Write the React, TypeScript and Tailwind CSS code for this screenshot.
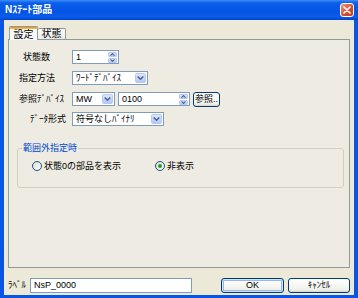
import React from 'react';

const FONT = "font-[family-name:'Liberation_Sans','Noto_Sans_CJK_JP',sans-serif]";

function Chevron({ dir }: { dir: 'up' | 'down' }) {
  return (
    <svg width="5" height="3" viewBox="0 0 5 3" className="block">
      <path
        d={dir === 'up' ? 'M0.5 2.6 L2.5 0.6 L4.5 2.6' : 'M0.5 0.4 L2.5 2.4 L4.5 0.4'}
        fill="none"
        stroke="#4D6185"
        strokeWidth="1.1"
      />
    </svg>
  );
}

function SpinBox({ value, width }: { value: string; width: string }) {
  return (
    <div className={`flex h-[14px] items-stretch border border-[#7F9DB9] bg-white ${width}`}>
      <span className="flex flex-1 items-center pl-[3px] text-[9px] leading-none text-black">{value}</span>
      <div className="flex w-[11px] flex-col gap-[1px] p-[1px]">
        <div className="flex flex-1 items-center justify-center rounded-[1px] border border-[#B7C9F3] bg-[linear-gradient(180deg,#DCE6FD,#B9CCF8)]">
          <Chevron dir="up" />
        </div>
        <div className="flex flex-1 items-center justify-center rounded-[1px] border border-[#B7C9F3] bg-[linear-gradient(180deg,#DCE6FD,#B9CCF8)]">
          <Chevron dir="down" />
        </div>
      </div>
    </div>
  );
}

function Combo({ value, width }: { value: string; width: string }) {
  return (
    <div className={`flex h-[14px] items-stretch border border-[#7F9DB9] bg-white ${width}`}>
      <span className="flex flex-1 items-center whitespace-nowrap pl-[3px] text-[9px] leading-none text-black">{value}</span>
      <div className="w-[13px] p-[1px]">
        <div className="flex h-full items-center justify-center rounded-[2px] border border-[#B7C9F3] bg-[linear-gradient(180deg,#DCE6FD,#B3C7F7)]">
          <svg width="7" height="4" viewBox="0 0 7 4" className="block">
            <path d="M0.7 0.5 L3.5 3.2 L6.3 0.5" fill="none" stroke="#4D6185" strokeWidth="1.5" />
          </svg>
        </div>
      </div>
    </div>
  );
}

function XpButton({ label, width, primary }: { label: string; width: string; primary?: boolean }) {
  return (
    <div
      className={`flex h-[15px] items-center justify-center whitespace-nowrap rounded-[3px] border border-[#003C74] bg-[linear-gradient(180deg,#FFFFFF,#F0F0EA_85%,#D6D0C5)] text-[9px] leading-none text-black ${width} ${
        primary ? 'shadow-[inset_0_0_0_1px_#CEE7FF,inset_0_0_0_2px_#98B8EA]' : ''
      }`}
    >
      {label}
    </div>
  );
}

function Radio({ checked }: { checked?: boolean }) {
  return (
    <div className="flex h-[10px] w-[10px] items-center justify-center rounded-full border border-[#1C5180] bg-[linear-gradient(135deg,#DCDBD3,#FFFFFF)]">
      {checked && <div className="h-[4px] w-[4px] rounded-full bg-[#21A121]" />}
    </div>
  );
}

export default function App() {
  return (
    <div className={`flex h-[298px] w-[358px] flex-col bg-[#0A55E3] ${FONT}`}>
      {/* title bar */}
      <div className="flex h-[20px] items-center bg-[linear-gradient(180deg,#3C8DF5_0%,#0A5EEA_15%,#0454E4_60%,#0A5CEA_85%,#0043CC_100%)] pl-[5px] pr-[4px]">
        <span className="text-[10px] font-bold leading-none text-white">Nｽﾃｰﾄ部品</span>
        <div className="ml-auto flex h-[14px] w-[14px] items-center justify-center rounded-[3px] border border-white bg-[linear-gradient(135deg,#EE9A80,#D6502F_55%,#C23E20)]">
          <svg width="8" height="8" viewBox="0 0 8 8" className="block">
            <path d="M1 1 L7 7 M7 1 L1 7" stroke="white" strokeWidth="1.6" strokeLinecap="round" />
          </svg>
        </div>
      </div>

      {/* dialog body */}
      <div className="mx-[4px] mb-[3px] flex flex-1 flex-col bg-[#ECE9D8] px-[4px] pt-[6px] pb-[2px]">
        {/* tabs */}
        <div className="relative z-10 flex h-[13px] items-end pl-[1px]">
          <div className="-mb-[1px] flex h-[14px] w-[29px] flex-col overflow-hidden rounded-t-[2px] border border-b-0 border-[#919B9C] bg-[#FCFCFE]">
            <div className="h-[2px] bg-[linear-gradient(180deg,#E68B2C,#FFC73C)]" />
            <div className="flex flex-1 items-center justify-center text-[10px] leading-none text-black">設定</div>
          </div>
          <div className="flex h-[11px] w-[28px] items-center justify-center rounded-t-[2px] border border-b-0 border-l-0 border-[#919B9C] bg-[linear-gradient(180deg,#FFFFFF,#ECEBE6)] text-[10px] leading-none text-black">
            状態
          </div>
        </div>

        {/* tab panel */}
        <div className="flex h-[229px] w-[342px] flex-col border border-[#919B9C] bg-[#EEECE2] pt-[10px] text-[9px] leading-none text-black">
          <div className="flex h-[14px] items-center">
            <span className="w-[63px] shrink-0 pl-[14px]">状態数</span>
            <SpinBox value="1" width="w-[47px]" />
          </div>
          <div className="mt-[7px] flex h-[14px] items-center">
            <span className="w-[63px] shrink-0 pl-[10px]">指定方法</span>
            <Combo value="ﾜｰﾄﾞﾃﾞﾊﾞｲｽ" width="w-[76px]" />
          </div>
          <div className="mt-[7px] flex h-[14px] items-center">
            <span className="w-[63px] shrink-0 pl-[10px]">参照ﾃﾞﾊﾞｲｽ</span>
            <Combo value="MW" width="w-[43px]" />
            <div className="ml-[3px]">
              <SpinBox value="0100" width="w-[72px]" />
            </div>
            <div className="ml-[3px]">
              <XpButton label="参照.." width="w-[27px]" />
            </div>
          </div>
          <div className="mt-[6px] flex h-[14px] items-center">
            <span className="w-[63px] shrink-0 pl-[21px]">ﾃﾞｰﾀ形式</span>
            <Combo value="符号なしﾊﾞｲﾅﾘ" width="w-[92px]" />
          </div>

          <fieldset className="mt-[17px] ml-[8px] mr-[5px] rounded-[3px] border border-[#D0D0BF] pt-[8px] pb-[16px] pl-[14px]">
            <legend className="-ml-[10px] px-[1px] text-[9px] leading-[10px] text-[#0046D5]">範囲外指定時</legend>
            <div className="flex h-[10px] items-center">
              <div className="flex w-[123px] items-center gap-[2px]">
                <Radio />
                <span>状態0の部品を表示</span>
              </div>
              <div className="flex items-center gap-[2px]">
                <Radio checked />
                <span>非表示</span>
              </div>
            </div>
          </fieldset>
        </div>

        {/* bottom row */}
        <div className="mt-[10px] flex h-[15px] items-center text-[9px] leading-none text-black">
          <span className="w-[22px] shrink-0">ﾗﾍﾞﾙ</span>
          <div className="flex h-[15px] w-[162px] items-center border border-[#7F9DB9] bg-white pl-[3px]">NsP_0000</div>
          <div className="ml-[29px]">
            <XpButton label="OK" width="w-[63px]" primary />
          </div>
          <div className="ml-[4px]">
            <XpButton label="ｷｬﾝｾﾙ" width="w-[62px]" />
          </div>
        </div>
      </div>
    </div>
  );
}
